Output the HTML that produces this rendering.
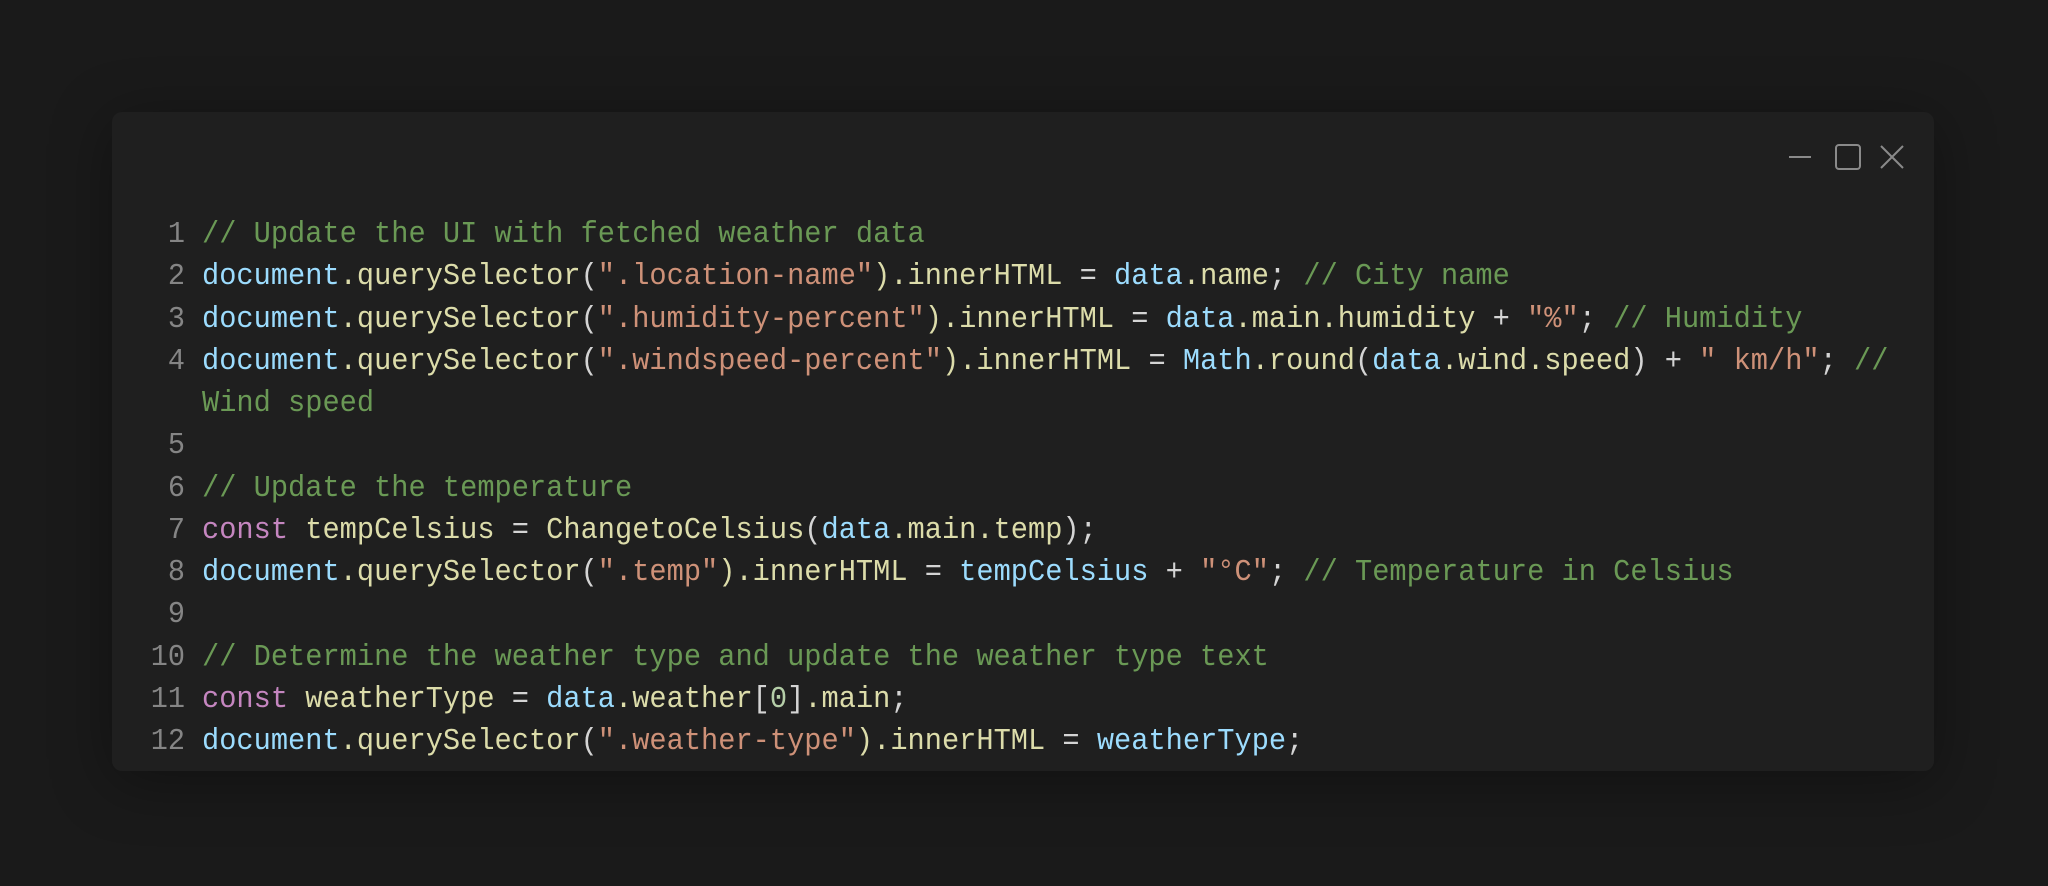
<!DOCTYPE html>
<html><head><meta charset="utf-8"><style>
html,body{margin:0;padding:0;background:#1a1a1a;width:2048px;height:886px;overflow:hidden}
.card{position:absolute;left:112px;top:112px;width:1822px;height:659px;background:#1f1f1f;border-radius:10px;box-shadow:0 10px 60px rgba(0,0,0,.35)}
.code{position:absolute;left:0;top:214px;font-family:"Liberation Mono",monospace;font-size:31px;color:#d4d4d4}
.row{height:42.25px;line-height:42.25px;position:relative;white-space:nowrap}
.n{position:absolute;left:0;width:185px;text-align:right;color:#858585;transform:scaleX(0.92);transform-origin:185px 0}
.t{position:absolute;left:202px;white-space:pre;transform:scaleX(0.925);transform-origin:0 0}
.c{color:#6a9955}.b{color:#9cdcfe}.y{color:#dcdcaa}.s{color:#ce9178}.k{color:#c586c0}.g{color:#b5cea8}
</style></head><body>
<div class="card"></div>
<svg style="position:absolute;left:0;top:0" width="2048" height="886">
<line x1="1789" y1="157" x2="1811" y2="157" stroke="#8a8a8a" stroke-width="2"/>
<rect x="1836" y="145" width="24" height="24" rx="3" fill="none" stroke="#8a8a8a" stroke-width="2"/>
<path d="M1881 146 L1903 168 M1903 146 L1881 168" stroke="#8a8a8a" stroke-width="2"/>
</svg>
<div class="code"><div class="row"><span class="n">1</span><span class="t"><span class="c">// Update the UI with fetched weather data</span></span></div><div class="row"><span class="n">2</span><span class="t"><span class="b">document</span><span class="y">.querySelector</span>(<span class="s">".location-name"</span><span class="y">).innerHTML</span> = <span class="b">data</span><span class="y">.name</span>; <span class="c">// City name</span></span></div><div class="row"><span class="n">3</span><span class="t"><span class="b">document</span><span class="y">.querySelector</span>(<span class="s">".humidity-percent"</span><span class="y">).innerHTML</span> = <span class="b">data</span><span class="y">.main.humidity</span> + <span class="s">"%"</span>; <span class="c">// Humidity</span></span></div><div class="row"><span class="n">4</span><span class="t"><span class="b">document</span><span class="y">.querySelector</span>(<span class="s">".windspeed-percent"</span><span class="y">).innerHTML</span> = <span class="b">Math</span><span class="y">.round</span>(<span class="b">data</span><span class="y">.wind.speed</span>) + <span class="s">" km/h"</span>; <span class="c">//</span></span></div><div class="row"><span class="t"><span class="c">Wind speed</span></span></div><div class="row"><span class="n">5</span></div><div class="row"><span class="n">6</span><span class="t"><span class="c">// Update the temperature</span></span></div><div class="row"><span class="n">7</span><span class="t"><span class="k">const</span> <span class="y">tempCelsius</span> = <span class="y">ChangetoCelsius</span>(<span class="b">data</span><span class="y">.main.temp</span>);</span></div><div class="row"><span class="n">8</span><span class="t"><span class="b">document</span><span class="y">.querySelector</span>(<span class="s">".temp"</span><span class="y">).innerHTML</span> = <span class="b">tempCelsius</span> + <span class="s">"°C"</span>; <span class="c">// Temperature in Celsius</span></span></div><div class="row"><span class="n">9</span></div><div class="row"><span class="n">10</span><span class="t"><span class="c">// Determine the weather type and update the weather type text</span></span></div><div class="row"><span class="n">11</span><span class="t"><span class="k">const</span> <span class="y">weatherType</span> = <span class="b">data</span><span class="y">.weather</span>[<span class="g">0</span>]<span class="y">.main</span>;</span></div><div class="row"><span class="n">12</span><span class="t"><span class="b">document</span><span class="y">.querySelector</span>(<span class="s">".weather-type"</span><span class="y">).innerHTML</span> = <span class="b">weatherType</span>;</span></div></div>
</body></html>
